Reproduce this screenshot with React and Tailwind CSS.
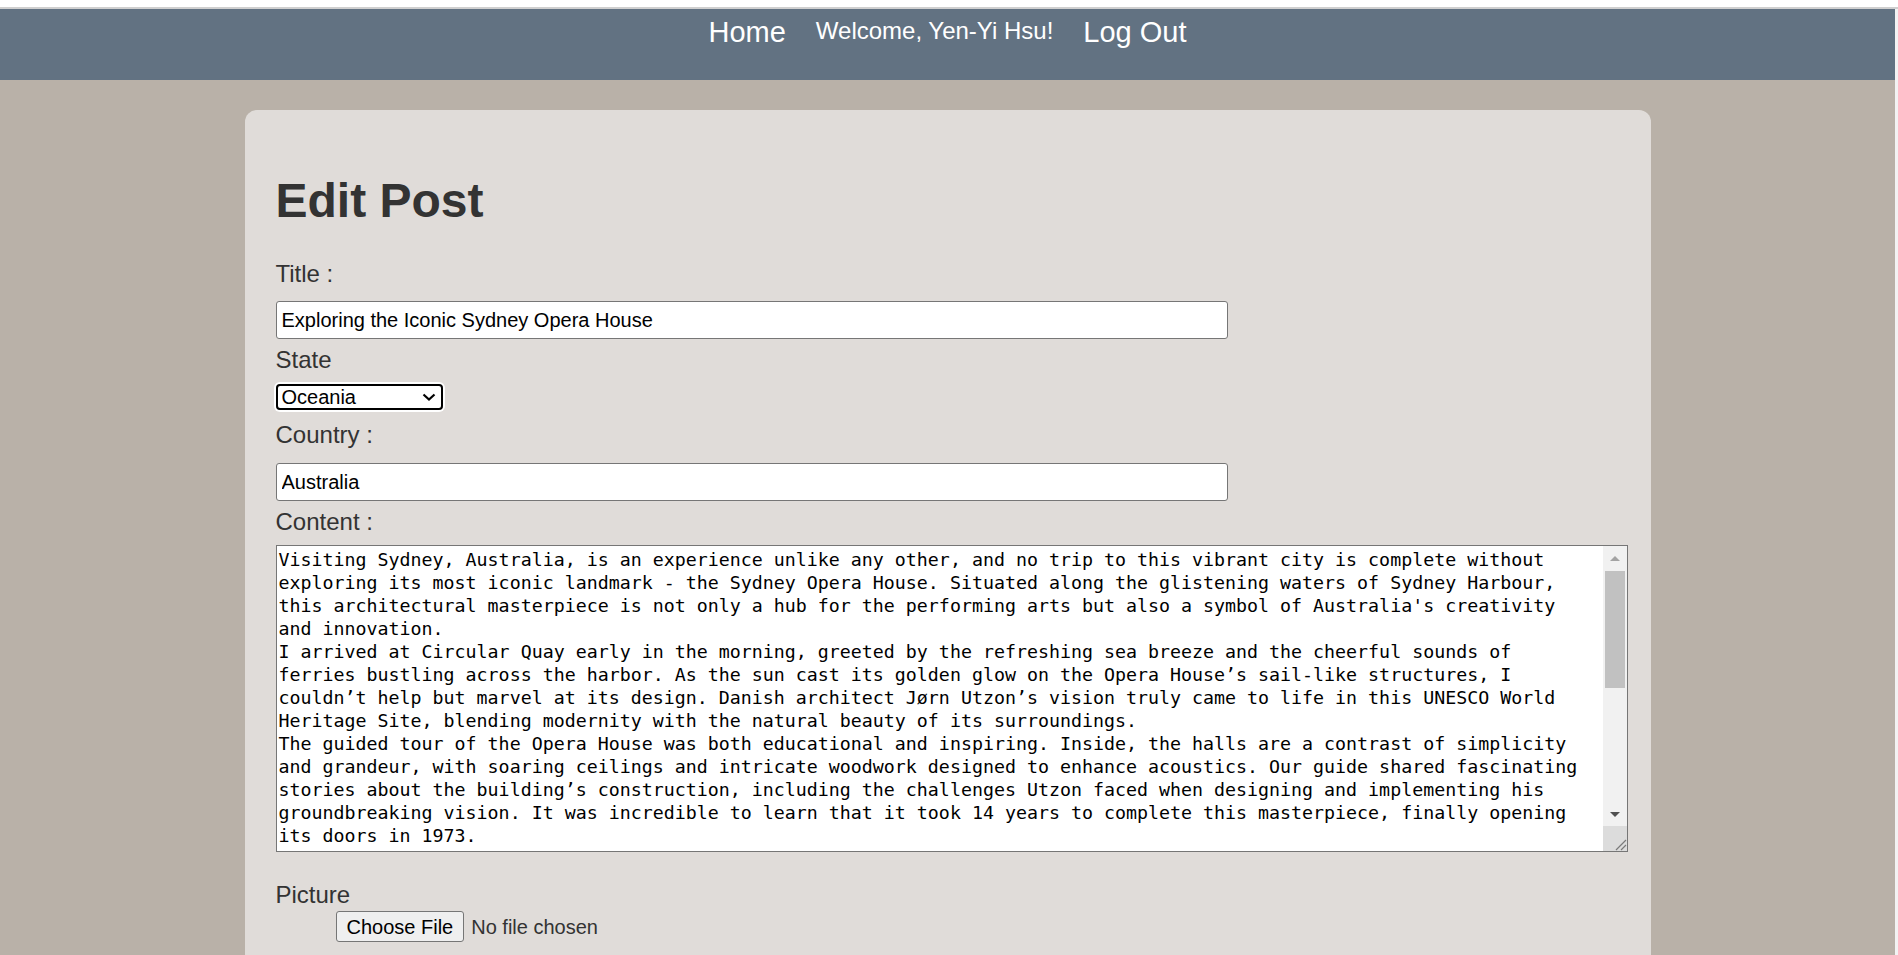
import { useState } from 'react';

const initialContent = `Visiting Sydney, Australia, is an experience unlike any other, and no trip to this vibrant city is complete without exploring its most iconic landmark - the Sydney Opera House. Situated along the glistening waters of Sydney Harbour, this architectural masterpiece is not only a hub for the performing arts but also a symbol of Australia's creativity and innovation.
I arrived at Circular Quay early in the morning, greeted by the refreshing sea breeze and the cheerful sounds of ferries bustling across the harbor. As the sun cast its golden glow on the Opera House’s sail-like structures, I couldn’t help but marvel at its design. Danish architect Jørn Utzon’s vision truly came to life in this UNESCO World Heritage Site, blending modernity with the natural beauty of its surroundings.
The guided tour of the Opera House was both educational and inspiring. Inside, the halls are a contrast of simplicity and grandeur, with soaring ceilings and intricate woodwork designed to enhance acoustics. Our guide shared fascinating stories about the building’s construction, including the challenges Utzon faced when designing and implementing his groundbreaking vision. It was incredible to learn that it took 14 years to complete this masterpiece, finally opening its doors in 1973.
After the tour, I strolled along the forecourt and took in the sweeping views of the Harbour Bridge and the skyline.`;

const Navbar = () => (
  <nav className="h-[71px] shrink-0 bg-[#627282] flex justify-center items-start pt-[9px] text-white">
    <a className="text-[29px] leading-none mr-[30px] cursor-pointer">Home</a>
    <span className="text-[24px] leading-none mt-[1px]">Welcome, Yen-Yi Hsu!</span>
    <a className="text-[29px] leading-none ml-[30px] cursor-pointer">Log Out</a>
  </nav>
);

const FakeScrollbar = () => (
  <div className="w-[24px] flex flex-col bg-[#f1f1f1]">
    <div className="h-[24px] flex items-center justify-center">
      <svg width="10" height="5" viewBox="0 0 10 5">
        <path d="M0 5 L5 0 L10 5 Z" fill="#a3a3a3" />
      </svg>
    </div>
    <div className="mt-[1px] mx-[2px] h-[117px] bg-[#c1c1c1]" />
    <div className="flex-1" />
    <div className="h-[24px] flex items-center justify-center">
      <svg width="10" height="5" viewBox="0 0 10 5">
        <path d="M0 0 L10 0 L5 5 Z" fill="#505050" />
      </svg>
    </div>
    <div className="h-[25px] bg-[#dcdcdc] flex items-end justify-end">
      <svg width="14" height="14" viewBox="0 0 14 14">
        <path d="M3 13 L13 3 M8 13 L13 8" stroke="#7a7a7a" strokeWidth="1.2" />
      </svg>
    </div>
  </div>
);

const EditPost = () => {
  const [title, setTitle] = useState('Exploring the Iconic Sydney Opera House');
  const [state, setState] = useState('Oceania');
  const [country, setCountry] = useState('Australia');
  const [content, setContent] = useState(initialContent);

  const labelCls = 'block text-[24px] leading-[28px] text-[#333333]';
  const inputCls =
    'block w-[952px] h-[38px] bg-white border border-[#767676] rounded-[3px] px-[5px] text-[20px] text-black outline-none';

  return (
    <div className="mx-auto mt-[30px] w-[1406px] bg-[#e0dcd9] rounded-[12px] pt-[63px] pl-[31px] pb-[60px]">
      <h1 className="text-[48px] leading-[56px] font-bold text-[#333333]">Edit Post</h1>

      <label className={`${labelCls} mt-[31px]`}>Title :</label>
      <input
        className={`${inputCls} mt-[13px]`}
        value={title}
        onChange={(e) => setTitle(e.target.value)}
      />

      <label className={`${labelCls} mt-[7px]`}>State</label>
      <div className="relative mt-[10px] w-[167px] h-[26px] rounded-[4px] shadow-[0_0_0_2px_#ffffff]">
        <select
          className="appearance-none w-full h-full bg-white border-2 border-black rounded-[4px] pl-[4px] text-[20px] leading-[22px] text-black outline-none"
          value={state}
          onChange={(e) => setState(e.target.value)}
        >
          <option>Asia</option>
          <option>Europe</option>
          <option>Africa</option>
          <option>North America</option>
          <option>South America</option>
          <option>Oceania</option>
        </select>
        <svg
          className="absolute left-[146px] top-[9px] pointer-events-none"
          width="14"
          height="8"
          viewBox="0 0 14 8"
        >
          <path d="M1.5 1.5 L7 6.5 L12.5 1.5" fill="none" stroke="#000" strokeWidth="2.2" />
        </svg>
      </div>

      <label className={`${labelCls} mt-[11px]`}>Country :</label>
      <input
        className={`${inputCls} mt-[14px]`}
        value={country}
        onChange={(e) => setCountry(e.target.value)}
      />

      <label className={`${labelCls} mt-[7px]`}>Content :</label>
      <div className="mt-[9px] w-[1352px] h-[307px] flex border border-[#767676] bg-white">
        <textarea
          spellCheck={false}
          className="flex-1 h-full resize-none overflow-hidden outline-none bg-white text-black font-['DejaVu_Sans_Mono',monospace] text-[18.3px] leading-[23px] pl-[2px] pr-[18px] pt-[2px]"
          value={content}
          onChange={(e) => setContent(e.target.value)}
        />
        <FakeScrollbar />
      </div>

      <label className={`${labelCls} mt-[29px]`}>Picture</label>
      <div className="mt-[2px] ml-[60px] flex items-center">
        <button className="h-[31px] px-[10px] bg-[#efefef] border border-[#767676] rounded-[3px] text-[20px] text-black">
          Choose File
        </button>
        <span className="ml-[7px] text-[20px] text-[#333333]">No file chosen</span>
      </div>
    </div>
  );
};

export default function App() {
  return (
    <div className="h-screen overflow-hidden flex flex-col bg-white font-['Liberation_Sans',Arial,sans-serif]">
      <div className="h-[7px] shrink-0 bg-white" />
      <div className="h-[2px] shrink-0 bg-[#cfcfcf]" />
      <div className="flex-1 min-h-0 flex">
        <div className="flex-1 min-h-0 overflow-hidden bg-[#b9b1a8]">
          <Navbar />
          <EditPost />
        </div>
        <div className="w-[3px] shrink-0 bg-[#f3f3f3]" />
      </div>
    </div>
  );
}
